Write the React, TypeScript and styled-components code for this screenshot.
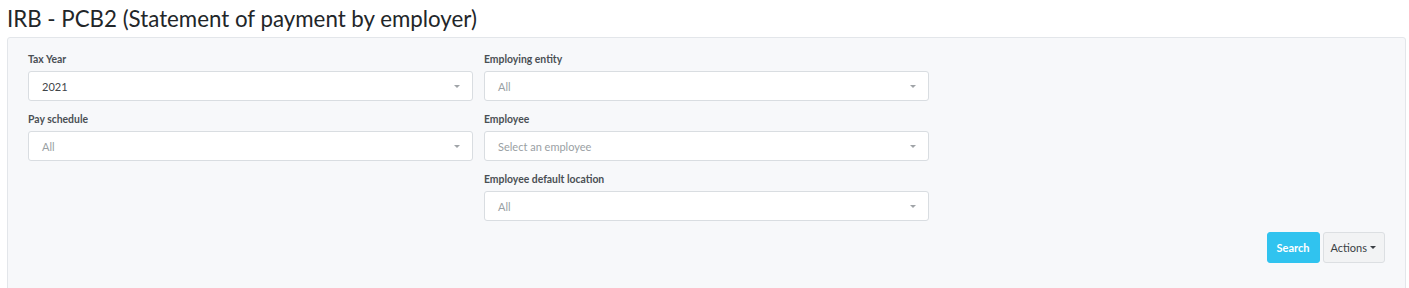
import React from 'react';
import styled, { createGlobalStyle } from 'styled-components';

const GlobalStyle = createGlobalStyle`
  html, body {
    margin: 0;
    padding: 0;
    background: #ffffff;
    font-family: Lato, "Open Sans", "Liberation Sans", sans-serif;
  }
`;

const Page = styled.div`
  padding: 0 3px 0 7px;
`;

const Title = styled.h1`
  margin: 0;
  padding-top: 5px;
  height: 37px;
  box-sizing: border-box;
  font-size: 22.3px;
  font-weight: 400;
  line-height: 28px;
  color: #222629;
`;

const Panel = styled.div`
  background: #f7f8fa;
  border: 1px solid #e3e6ea;
  border-radius: 3px;
  padding: 14px 20px 24px 20px;
  min-height: 260px;
`;

const FieldGrid = styled.div`
  display: grid;
  grid-template-columns: 445px 445px;
  column-gap: 11px;
  row-gap: 11px;
`;

const Field = styled.div<{ $col: number }>`
  grid-column: ${(p) => p.$col};
  display: flex;
  flex-direction: column;
`;

const Label = styled.label`
  font-size: 10.4px;
  font-weight: 700;
  color: #4a4f54;
  line-height: 14px;
  margin-bottom: 5px;
`;

const SelectBox = styled.div<{ $placeholder?: boolean }>`
  height: 30px;
  box-sizing: border-box;
  border: 1px solid #d9dde1;
  border-radius: 3px;
  background: #ffffff;
  display: flex;
  align-items: center;
  padding: 0 12px 0 13px;
  font-size: 11px;
  color: ${(p) => (p.$placeholder ? '#9a9fa4' : '#3f4448')};
`;

const Value = styled.span`
  flex: 1;
`;

const Caret = styled.span`
  width: 0;
  height: 0;
  border-left: 3px solid transparent;
  border-right: 3px solid transparent;
  border-top: 3px solid #a0a4a8;
`;

const ButtonRow = styled.div`
  display: flex;
  justify-content: flex-end;
  gap: 3px;
  margin-top: 11px;
`;

const Button = styled.button<{ $primary?: boolean }>`
  height: 31px;
  box-sizing: border-box;
  border-radius: 3px;
  font-family: inherit;
  font-size: 11px;
  padding: ${(p) => (p.$primary ? '0 9px' : '0 8px 0 7px')};
  display: flex;
  align-items: center;
  gap: 3px;
  cursor: pointer;
  border: 1px solid ${(p) => (p.$primary ? '#30c3ef' : '#dcdfe2')};
  background: ${(p) => (p.$primary ? '#30c3ef' : '#f2f3f4')};
  color: ${(p) => (p.$primary ? '#ffffff' : '#3a3f44')};
  font-weight: ${(p) => (p.$primary ? 700 : 400)};
`;

const ButtonCaret = styled.span`
  width: 0;
  height: 0;
  border-left: 3px solid transparent;
  border-right: 3px solid transparent;
  border-top: 3px solid #3a3f44;
`;

interface FieldDef {
  label: string;
  value: string;
  placeholder?: boolean;
  col: number;
}

const fields: FieldDef[] = [
  { label: 'Tax Year', value: '2021', col: 1 },
  { label: 'Employing entity', value: 'All', placeholder: true, col: 2 },
  { label: 'Pay schedule', value: 'All', placeholder: true, col: 1 },
  { label: 'Employee', value: 'Select an employee', placeholder: true, col: 2 },
  { label: 'Employee default location', value: 'All', placeholder: true, col: 2 },
];

export default function App() {
  return (
    <Page>
      <GlobalStyle />
      <Title>IRB - PCB2 (Statement of payment by employer)</Title>
      <Panel>
        <FieldGrid>
          {fields.map((f) => (
            <Field key={f.label} $col={f.col}>
              <Label>{f.label}</Label>
              <SelectBox $placeholder={f.placeholder}>
                <Value>{f.value}</Value>
                <Caret />
              </SelectBox>
            </Field>
          ))}
        </FieldGrid>
        <ButtonRow>
          <Button $primary>Search</Button>
          <Button>
            Actions
            <ButtonCaret />
          </Button>
        </ButtonRow>
      </Panel>
    </Page>
  );
}
